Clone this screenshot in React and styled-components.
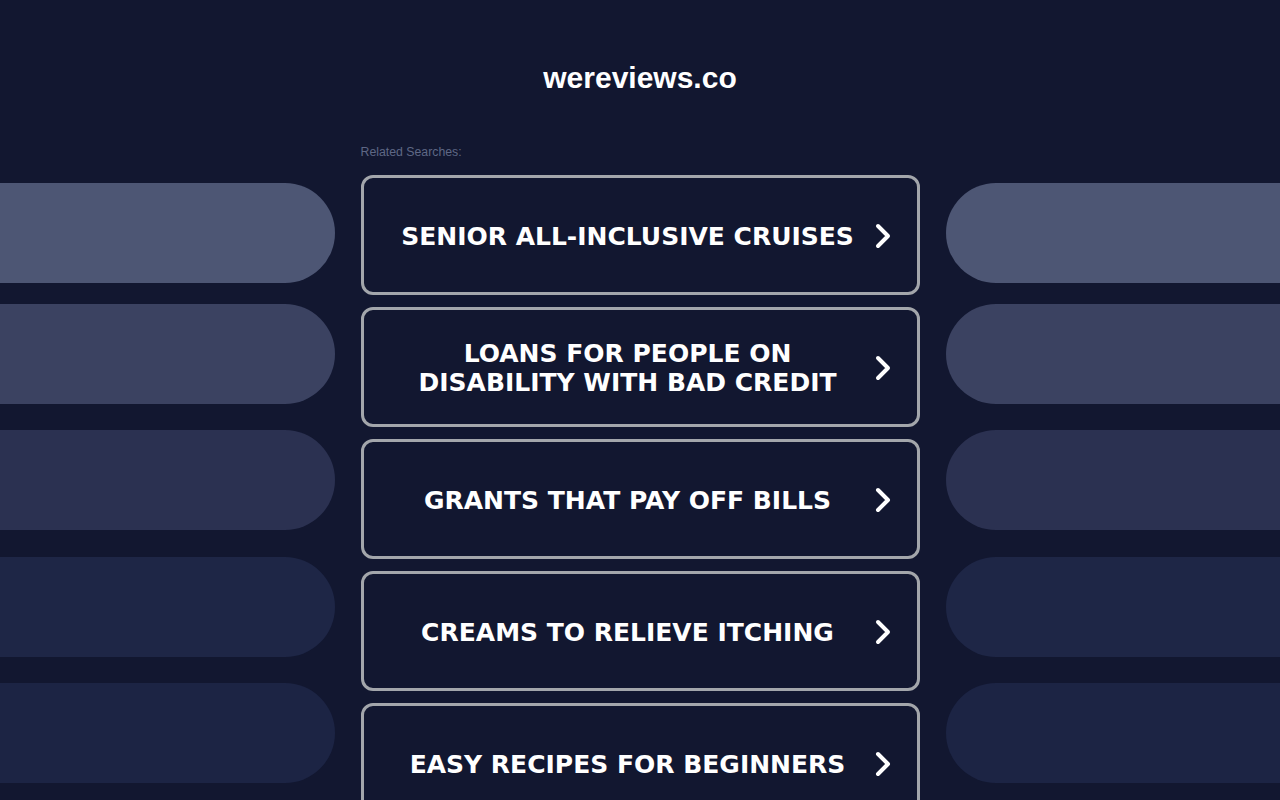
import React from "react";
import styled, { createGlobalStyle } from "styled-components";

const GlobalStyle = createGlobalStyle`
  html, body {
    margin: 0;
    padding: 0;
    height: 100%;
    overflow: hidden;
    background-color: #121730;
  }
  body {
    font-family: "Liberation Sans", Arial, sans-serif;
  }
`;

const Viewport = styled.div`
  height: 100vh;
  overflow-y: scroll;
  background-color: #121730;

  &::-webkit-scrollbar {
    width: 15px;
    background: #f8f8f8;
  }
  &::-webkit-scrollbar-track {
    background: #f8f8f8;
  }
  &::-webkit-scrollbar-thumb {
    background: #c1c1c1;
    border-radius: 8px;
    border: 3px solid #f8f8f8;
  }
`;

const Page = styled.div`
  display: flex;
  min-height: 1420px;
`;

const Side = styled.div`
  flex: 1;
  display: flex;
  flex-direction: column;
  padding-top: 183px;
`;

const Pill = styled.div`
  height: 100px;
  margin-top: ${(props) => props.$gap}px;
  background-color: ${(props) => props.$color};
  border-radius: ${(props) =>
    props.$side === "left" ? "0 50px 50px 0" : "50px 0 0 50px"};
`;

const Center = styled.main`
  width: 559px;
  margin: 0 26px;
  display: flex;
  flex-direction: column;
`;

const Title = styled.h1`
  margin: 60px 0 0;
  height: 36px;
  line-height: 36px;
  font-size: 30px;
  font-weight: 700;
  color: #ffffff;
  text-align: center;
`;

const Label = styled.div`
  margin: 49px 0 16px;
  font-size: 12.3px;
  line-height: 14px;
  color: #5e6785;
`;

const List = styled.div`
  display: flex;
  flex-direction: column;
  gap: 12px;
`;

const SearchButton = styled.a`
  box-sizing: border-box;
  height: 120px;
  display: flex;
  align-items: center;
  padding: 2px 25px 0 24px;
  border: 3px solid #a3a6ab;
  border-radius: 12px;
  background-color: #121730;
  color: #ffffff;
  text-decoration: none;
  cursor: pointer;
`;

const ButtonText = styled.span`
  flex: 1;
  text-align: center;
  font-family: "DejaVu Sans", Verdana, sans-serif;
  font-weight: 700;
  font-size: 25px;
  line-height: 29px;
  text-transform: uppercase;
`;

const Chevron = styled.svg`
  flex: none;
  width: 18px;
  height: 28px;
  margin-left: 6px;
`;

const pills = [
  { gap: 0, color: "#4d5674" },
  { gap: 21, color: "#3b4261" },
  { gap: 26, color: "#2b3151" },
  { gap: 27, color: "#1e2646" },
  { gap: 26, color: "#1c2444" },
];

const searches = [
  "Senior All-Inclusive Cruises",
  "Loans for People on Disability with Bad Credit",
  "Grants That Pay off Bills",
  "Creams to Relieve Itching",
  "Easy Recipes for Beginners",
  "Online Degree Programs",
];

function ChevronIcon() {
  return (
    <Chevron viewBox="0 0 18 28" fill="none">
      <path
        d="M4 4 L14 14 L4 24"
        stroke="#ffffff"
        strokeWidth="4"
        strokeLinecap="round"
        strokeLinejoin="round"
      />
    </Chevron>
  );
}

function App() {
  return (
    <>
      <GlobalStyle />
      <Viewport>
        <Page>
          <Side>
            {pills.map((p, i) => (
              <Pill key={i} $side="left" $gap={p.gap} $color={p.color} />
            ))}
          </Side>
          <Center>
            <Title>wereviews.co</Title>
            <Label>Related Searches:</Label>
            <List>
              {searches.map((s) => (
                <SearchButton key={s}>
                  <ButtonText>{s}</ButtonText>
                  <ChevronIcon />
                </SearchButton>
              ))}
            </List>
          </Center>
          <Side>
            {pills.map((p, i) => (
              <Pill key={i} $side="right" $gap={p.gap} $color={p.color} />
            ))}
          </Side>
        </Page>
      </Viewport>
    </>
  );
}

export default App;
